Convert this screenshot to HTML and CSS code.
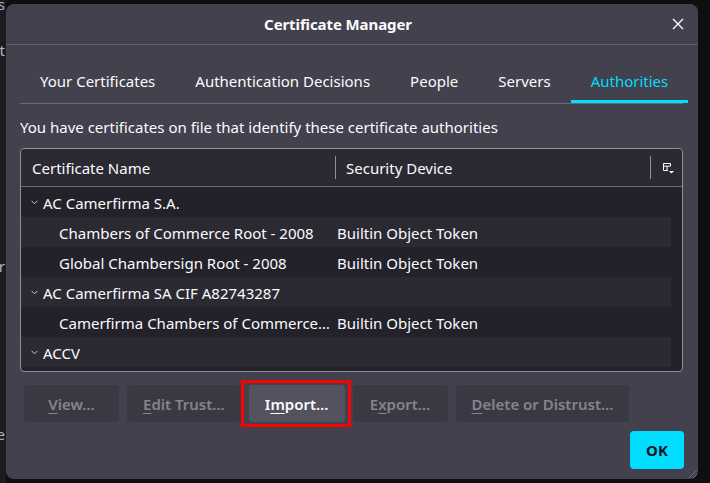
FILE: index.html
```html
<!DOCTYPE html>
<html>
<head>
<meta charset="utf-8">
<title>Certificate Manager</title>
<link rel="stylesheet" href="styles.css">
</head>
<body>
<div class="page">
  <div class="frag f1">Certificates</div>
  <div class="frag f2">Manage cert</div>
  <div class="frag f3">Security for</div>
  <div class="frag f4">Query OCSP responde</div>
</div>
<div class="dialog">
  <div class="titlebar">
    <span class="title">Certificate Manager</span>
    <button class="close" aria-label="Close">
      <svg width="12" height="12" viewBox="0 0 12 12"><path d="M1 1L11 11M11 1L1 11" stroke="#fbfbfe" stroke-width="1.4" fill="none"/></svg>
    </button>
  </div>
  <div class="content">
    <div class="tabs">
      <div class="tab">Your Certificates</div>
      <div class="tab">Authentication Decisions</div>
      <div class="tab">People</div>
      <div class="tab">Servers</div>
      <div class="tab selected">Authorities</div>
    </div>
    <p class="desc">You have certificates on file that identify these certificate authorities</p>
    <div class="tree">
      <div class="thead">
        <div class="hcell h1">Certificate Name</div>
        <div class="sep"></div>
        <div class="hcell h2">Security Device</div>
        <div class="sep"></div>
        <div class="picker">
          <svg width="11" height="11" viewBox="0 0 11 11"><path d="M0.5 0.5H7.5V3M0.5 0.5V7.5H5M0.5 3.2H7.5M4 3.2V7.5" stroke="#fbfbfe" stroke-width="1" fill="none"/><path d="M6 8H11L8.5 10.5Z" fill="#fbfbfe"/></svg>
        </div>
      </div>
      <div class="tbody">
        <div class="row parent"><div class="cell c1"><svg class="twisty" width="7" height="5" viewBox="0 0 7 5"><path d="M0.5 0.8L3.5 3.8L6.5 0.8" stroke="#c8c8d0" stroke-width="1" fill="none"/></svg><span class="txt">AC Camerfirma S.A.</span></div><div class="cell c2"></div></div>
        <div class="row child"><div class="cell c1"><span class="txt">Chambers of Commerce Root - 2008</span></div><div class="cell c2">Builtin Object Token</div></div>
        <div class="row child"><div class="cell c1"><span class="txt">Global Chambersign Root - 2008</span></div><div class="cell c2">Builtin Object Token</div></div>
        <div class="row parent"><div class="cell c1"><svg class="twisty" width="7" height="5" viewBox="0 0 7 5"><path d="M0.5 0.8L3.5 3.8L6.5 0.8" stroke="#c8c8d0" stroke-width="1" fill="none"/></svg><span class="txt">AC Camerfirma SA CIF A82743287</span></div><div class="cell c2"></div></div>
        <div class="row child"><div class="cell c1"><span class="txt" title="Camerfirma Chambers of Commerce Root">Camerfirma Chambers of Commerce…</span></div><div class="cell c2">Builtin Object Token</div></div>
        <div class="row parent"><div class="cell c1"><svg class="twisty" width="7" height="5" viewBox="0 0 7 5"><path d="M0.5 0.8L3.5 3.8L6.5 0.8" stroke="#c8c8d0" stroke-width="1" fill="none"/></svg><span class="txt">ACCV</span></div><div class="cell c2"></div></div>
        <div class="row child"><div class="cell c1"><span class="txt">ACCVRAIZ1</span></div><div class="cell c2">Builtin Object Token</div></div>
      </div>
    </div>
    <div class="actions">
      <button class="btn" disabled><u>V</u>iew…</button>
      <button class="btn" disabled><u>E</u>dit Trust…</button>
      <span class="highlight"><button class="btn active">I<u>m</u>port…</button></span>
      <button class="btn" disabled>E<u>x</u>port…</button>
      <button class="btn" disabled><u>D</u>elete or Distrust…</button>
    </div>
    <div class="footer">
      <button class="ok">OK</button>
    </div>
  </div>
  <div class="grip"></div>
</div>
</body>
</html>
```

FILE: styles.css
```css
* { box-sizing: border-box; }
html, body {
  margin: 0;
  padding: 0;
  width: 710px;
  height: 483px;
  overflow: hidden;
  background: #0f0f12;
  font-family: "Noto Sans", "Open Sans", sans-serif;
  color: #fbfbfe;
}
.page {
  width: 6px;
  height: 483px;
  background: #1c1b22;
  overflow: hidden;
  display: flex;
  flex-direction: column;
}
.frag {
  display: flex;
  justify-content: flex-end;
  white-space: nowrap;
  font-size: 15px;
  line-height: 20px;
  height: 20px;
  color: #b5b4bc;
  margin-right: 1px;
}
.f1 { margin-top: -6px; }
.f2 { margin-top: 26px; }
.f3 { margin-top: 196px; }
.f4 { margin-top: 148px; }

.dialog {
  position: absolute;
  left: 6px;
  top: 4px;
  width: 692px;
  height: 475px;
  background: #42414d;
  border-radius: 8px;
  display: flex;
  flex-direction: column;
}
.titlebar {
  position: relative;
  height: 41px;
  border-bottom: 1px solid #5f5e69;
  display: flex;
  align-items: center;
  justify-content: center;
  padding-right: 28px;
}
.title {
  font-size: 15px;
  font-weight: 700;
  letter-spacing: -0.1px;
}
.close {
  position: absolute;
  right: 14px;
  top: 14px;
  width: 12px;
  height: 12px;
  padding: 0;
  border: 0;
  background: none;
  display: flex;
}
.content {
  padding: 0 15px 0 14px;
  display: flex;
  flex-direction: column;
}
.tabs {
  margin-top: 18px;
  display: flex;
  border-bottom: 1px solid #6a6974;
  height: 41px;
}
.tab {
  flex: none;
  padding: 0 20px;
  height: 40px;
  border-bottom: 3px solid transparent;
  font-size: 15px;
  line-height: 37px;
  white-space: nowrap;
}
.tab.selected {
  color: #00ddff;
  border-bottom-color: #00ddff;
}
.desc {
  margin: 13px 0 0;
  font-size: 15px;
  line-height: 20px;
}
.tree {
  margin-top: 11px;
  border: 1px solid #8f8f9d;
  border-radius: 4px;
  background: #23222b;
  height: 224px;
  overflow: hidden;
}
.thead {
  height: 38px;
  background: #2b2a33;
  border-bottom: 1px solid #6a6974;
  border-radius: 4px 4px 0 0;
  display: flex;
  align-items: center;
}
.hcell {
  font-size: 15px;
  white-space: nowrap;
}
.h1 { width: 314px; padding-left: 11px; }
.h2 { width: 314px; padding-left: 10px; }
.sep {
  width: 1px;
  height: 23px;
  background: #8f8f9d;
}
.picker {
  flex: 1;
  display: flex;
  padding-left: 12px;
  padding-top: 1px;
}
.tbody {
  padding-right: 11px;
}
.row {
  height: 30px;
  padding-top: 2px;
  display: flex;
  align-items: center;
  font-size: 15px;
  white-space: nowrap;
}
.row:nth-child(even) { background: #2b2a33; }
.cell.c1 {
  width: 316px;
  flex: none;
  display: flex;
  align-items: center;
  overflow: hidden;
  padding-right: 5px;
}
.txt {
  overflow: hidden;
  text-overflow: ellipsis;
}
.parent .c1 { padding-left: 10px; }
.child .c1 { padding-left: 38px; }
.twisty { flex: none; margin-right: 5px; margin-top: -1px; }
.cell.c2 { flex: 1; overflow: hidden; }

.actions {
  margin-top: 13px;
  padding-left: 4px;
  display: flex;
  gap: 8px;
}
.btn {
  height: 37px;
  min-width: 95px;
  padding: 0 16px;
  border: 0;
  border-radius: 4px;
  background: #3a3943;
  color: #85848d;
  font-family: "Noto Sans", "Open Sans", sans-serif;
  font-size: 15px;
  font-weight: 600;
  white-space: nowrap;
}
.btn u { text-underline-offset: 3px; }
.btn.active {
  background: #53525e;
  color: #fbfbfe;
}
.highlight {
  position: relative;
  display: flex;
}
.highlight::after {
  content: "";
  position: absolute;
  left: -8px;
  right: -6px;
  top: -5px;
  bottom: -5px;
  border: 3px solid #ff0000;
}
.footer {
  margin-top: 9px;
  display: flex;
  justify-content: flex-end;
  margin-right: -1px;
}
.ok {
  width: 54px;
  height: 38px;
  border: 0;
  border-radius: 4px;
  background: #00ddff;
  color: #15141a;
  font-family: "Noto Sans", "Open Sans", sans-serif;
  font-size: 15px;
  font-weight: 700;
}
.grip {
  position: absolute;
  right: 1px;
  bottom: 1px;
  width: 10px;
  height: 10px;
  background: repeating-linear-gradient(135deg, transparent 0 2px, #6d6c76 2px 3px);
  clip-path: polygon(100% 0, 100% 100%, 0 100%);
}
```
